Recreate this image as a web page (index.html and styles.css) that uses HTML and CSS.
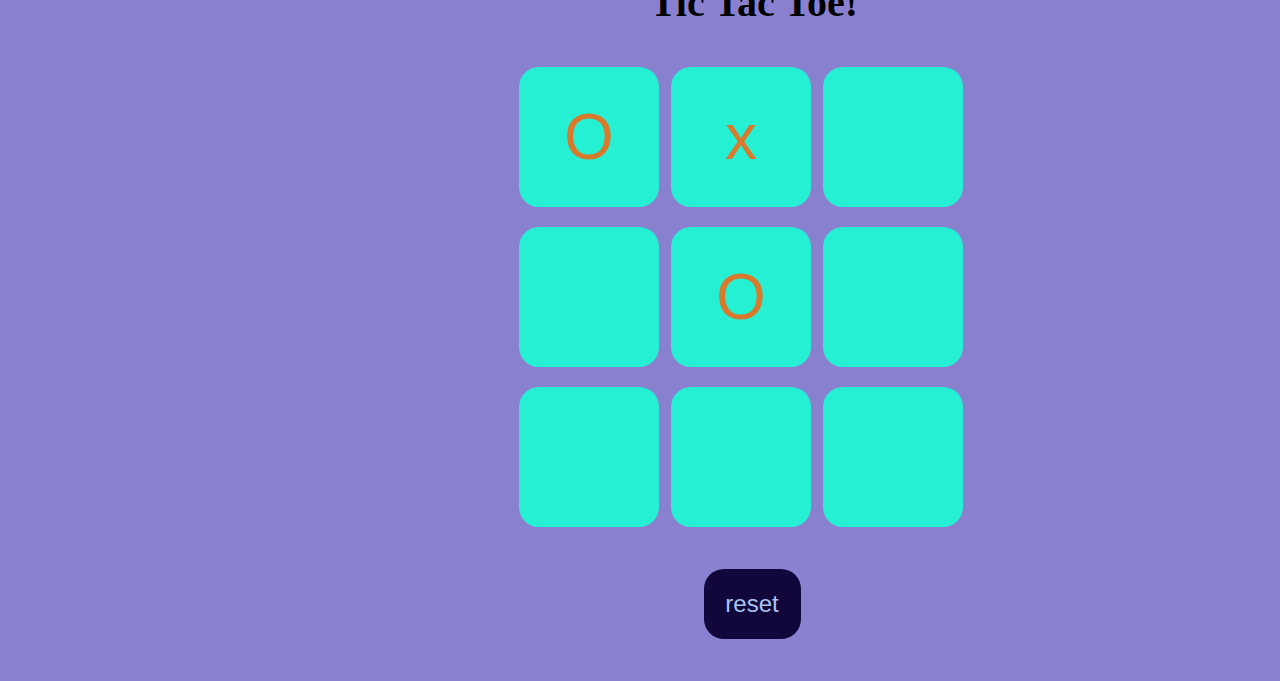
FILE: index.html
```html
<!DOCTYPE html>
<html>
<head>
<meta charset="utf-8">
<link rel="stylesheet" href="styles.css">
</head>
<body>
<main class="page">
  <h1 class="title">Tic Tac Toe!</h1>
  <div class="board">
    <div class="cell">O</div>
    <div class="cell">x</div>
    <div class="cell"></div>
    <div class="cell"></div>
    <div class="cell">O</div>
    <div class="cell"></div>
    <div class="cell"></div>
    <div class="cell"></div>
    <div class="cell"></div>
  </div>
  <button class="reset">reset</button>
</main>
</body>
</html>
```
FILE: styles.css
```css
html, body {
  margin: 0;
  padding: 0;
  background: #8a80d0;
  overflow: hidden;
}
.page {
  display: flex;
  flex-direction: column;
  align-items: center;
  box-sizing: border-box;
  width: 1280px;
  height: 681px;
  padding-left: 224px;
}
.title {
  font-family: "Liberation Serif", serif;
  font-weight: bold;
  font-size: 40px;
  line-height: 40px;
  margin: -17px 0 44px 4px;
  color: #000;
}
.board {
  display: grid;
  grid-template-columns: repeat(3, 140px);
  grid-auto-rows: 140px;
  column-gap: 12px;
  row-gap: 20px;
  margin-right: 22px;
}
.cell {
  background: #26f0d4;
  border-radius: 20px;
  display: flex;
  align-items: center;
  justify-content: center;
  font-family: "Liberation Sans", Arial, sans-serif;
  font-size: 64px;
  color: #d8792c;
}
.reset {
  margin-top: 42px;
  width: 97px;
  height: 70px;
  border: none;
  border-radius: 20px;
  background: #12073a;
  color: #a9c4f2;
  font-family: "Liberation Sans", Arial, sans-serif;
  font-size: 24px;
  padding: 0;
}
```
